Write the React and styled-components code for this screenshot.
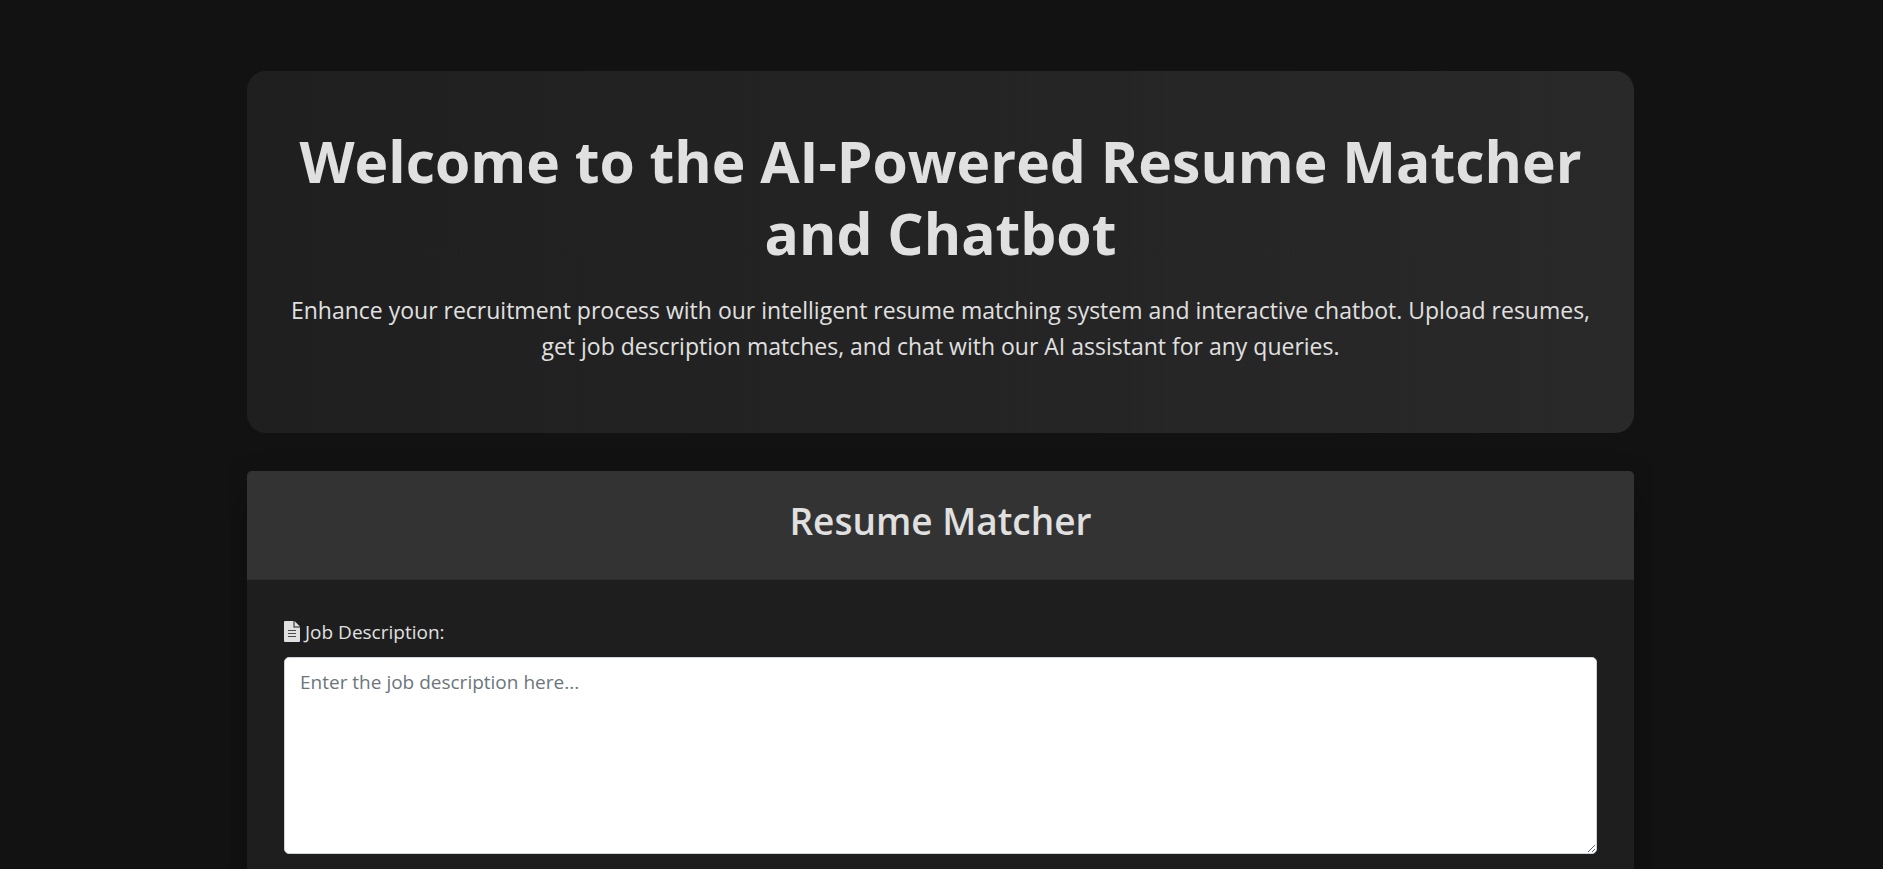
import React from "react";
import styled, { createGlobalStyle } from "styled-components";

const GlobalStyle = createGlobalStyle`
  *, *::before, *::after { box-sizing: border-box; }
  body {
    margin: 0;
    background: #121212;
    color: #e0e0e0;
    font-family: "Open Sans", "Noto Sans", sans-serif;
    font-size: 19px;
    line-height: 30px;
  }
`;

const Page = styled.main`
  width: 100%;
  max-width: 1425px;
  margin: 0 auto;
  padding: 71px 20px 0 18px;
  height: 100vh;
  overflow: hidden;
`;

const Hero = styled.section`
  padding: 54px 40px 69px;
  margin-bottom: 38px;
  border-radius: 19px;
  background: linear-gradient(to right, #1f1f1f, #292929);
  text-align: center;
`;

const Title = styled.h1`
  margin: 0 0 23px;
  font-size: 57px;
  font-weight: 700;
  line-height: 72px;
`;

const Lead = styled.p`
  margin: 0;
  font-size: 23px;
  line-height: 36px;
`;

const Card = styled.section`
  border-radius: 5px;
  background: #1e1e1e;
  box-shadow: 0 19px 38px rgba(0, 0, 0, 0.3);
`;

const CardHeader = styled.header`
  padding: 26px 25px 34px;
  border-bottom: 1px solid #2d2d2d;
  border-radius: 5px 5px 0 0;
  background: #333333;
  text-align: center;
`;

const CardTitle = styled.h2`
  margin: 0;
  font-size: 37px;
  font-weight: 600;
  line-height: 48px;
`;

const CardBody = styled.form`
  padding: 37px 37px 60px;
`;

const Label = styled.label`
  display: flex;
  align-items: center;
  gap: 5px;
  margin-bottom: 10px;
`;

const FileIcon = styled.svg`
  width: 16px;
  height: 21px;
  margin-bottom: 2px;
`;

const TextArea = styled.textarea`
  display: block;
  width: 100%;
  height: 197px;
  padding: 9px 15px;
  border: 1px solid #ced4da;
  border-radius: 5px;
  background: #ffffff;
  color: #495057;
  font: inherit;
  resize: vertical;

  &::placeholder { color: #6c757d; opacity: 1; }
`;

export default function App() {
  return (
    <>
      <GlobalStyle />
      <Page>
        <Hero>
          <Title>Welcome to the AI-Powered Resume Matcher and Chatbot</Title>
          <Lead>
            Enhance your recruitment process with our intelligent resume matching system and
            interactive chatbot. Upload resumes, get job description matches, and chat with our AI
            assistant for any queries.
          </Lead>
        </Hero>
        <Card>
          <CardHeader>
            <CardTitle>Resume Matcher</CardTitle>
          </CardHeader>
          <CardBody>
            <Label htmlFor="job-description">
              <FileIcon viewBox="0 0 16 21" aria-hidden="true">
                <path d="M1 0H9.500V6.500H16V20a1 1 0 0 1-1 1H1a1 1 0 0 1-1-1V1a1 1 0 0 1 1-1z" fill="#e0e0e0" />
                <path d="M10.500 0L16 5.500H10.500z" fill="#e0e0e0" />
                <path d="M4 9.500H12M4 12.500H12M4 15.500H12" stroke="#4a4a4a" strokeWidth="1" />
              </FileIcon>
              Job Description:
            </Label>
            <TextArea id="job-description" placeholder="Enter the job description here..." />
          </CardBody>
        </Card>
      </Page>
    </>
  );
}
